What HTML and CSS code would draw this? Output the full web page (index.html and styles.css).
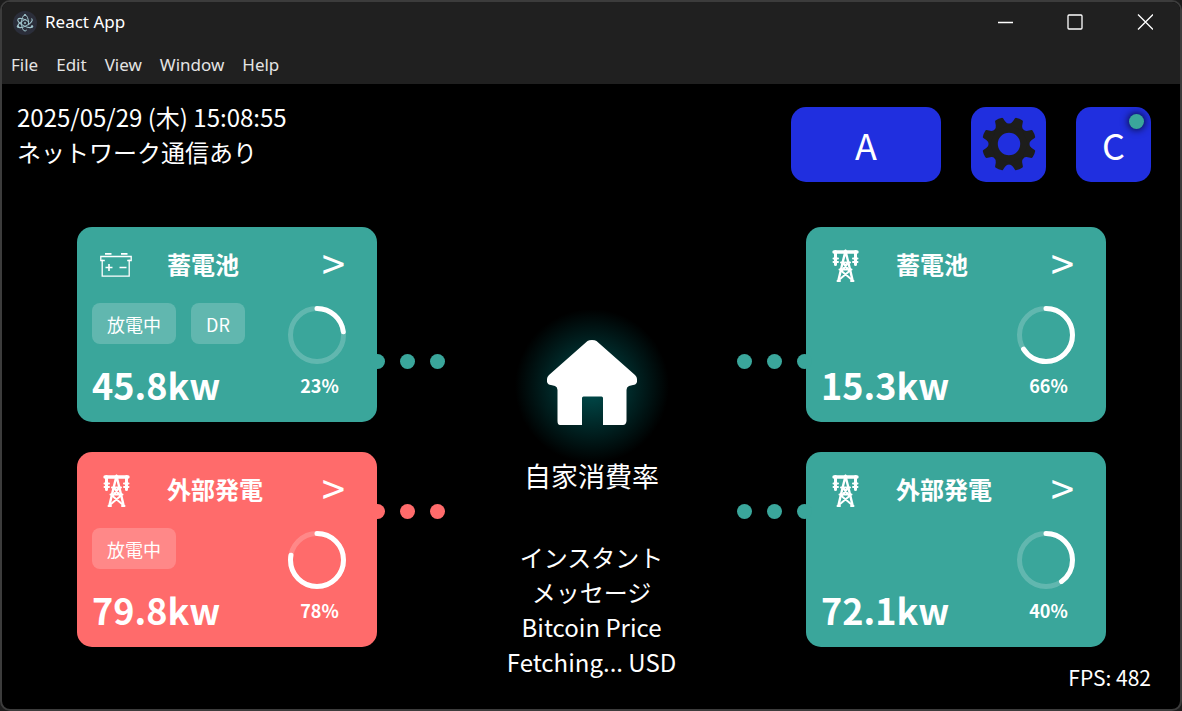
FILE: index.html
```html
<!DOCTYPE html>
<html lang="ja">
<head>
<meta charset="utf-8">
<title>React App</title>
<link rel="stylesheet" href="styles.css">
</head>
<body>
<svg class="symbols" aria-hidden="true">
  <symbol id="tower" viewBox="0 0 32 36">
    <g fill="none" stroke="#fff" stroke-linecap="round" stroke-linejoin="round">
      <path d="M5 5h23" stroke-width="3.4"/>
      <path d="M16.500 3.500v2" stroke-width="2"/>
      <path d="M6.500 4.500v13M26.500 4.500v13" stroke-width="3"/>
      <path d="M4.500 11.500h4.500M4.500 15h4.500M24 11.500h4.500M24 15h4.500" stroke-width="2"/>
      <path d="M16.500 4L14 14l-4.500 19M16.500 4L19 14l4.500 19" stroke-width="2.400"/>
      <path d="M12 15.500h9M10.500 22.500h12M14 16l6.500 8M19 16l-6.500 8M12.500 24l9.500 8M20.500 24L11 32" stroke-width="2"/>
      <path d="M8.500 34h2.500M22 34h2.500" stroke-width="2"/>
    </g>
  </symbol>
</svg>
<div class="window">
  <header class="titlebar">
    <svg class="app-icon" viewBox="0 0 24 24" aria-hidden="true">
      <circle cx="12" cy="12" r="12" fill="#2b2e3a"/>
      <g fill="none" stroke="#9fc4cb" stroke-width="1">
        <ellipse cx="12" cy="12" rx="8" ry="3" transform="rotate(28 12 12)" stroke-dasharray="30 5"/>
        <ellipse cx="12" cy="12" rx="8" ry="3" transform="rotate(-28 12 12)" stroke-dasharray="30 5"/>
        <ellipse cx="12" cy="12" rx="8" ry="3.500" transform="rotate(90 12 12)" stroke-dasharray="30 5"/>
      </g>
      <g fill="#9fc4cb"><circle cx="12" cy="12" r="1"/><circle cx="5" cy="15.500" r="1.200"/><circle cx="19" cy="15.500" r="1.200"/><circle cx="12" cy="4" r="1.100"/></g>
    </svg>
    <span class="app-title">React App</span>
    <div class="window-controls">
      <button class="window-button" aria-label="Minimize"><svg viewBox="0 0 16 16"><path d="M1 8.500h15"/></svg></button>
      <button class="window-button" aria-label="Maximize"><svg viewBox="0 0 16 16"><rect x="1" y="1" width="14" height="14" rx="1"/></svg></button>
      <button class="window-button" aria-label="Close"><svg viewBox="0 0 16 16"><path d="M1 .5l15 15M16 .5l-15 15"/></svg></button>
    </div>
  </header>
  <nav class="menubar">
    <button class="menu-item">File</button>
    <button class="menu-item">Edit</button>
    <button class="menu-item">View</button>
    <button class="menu-item">Window</button>
    <button class="menu-item">Help</button>
  </nav>
  <div class="app">
    <div class="topbar">
      <div class="status">
        <div>2025/05/29 (木) 15:08:55</div>
        <div>ネットワーク通信あり</div>
      </div>
      <div class="actions">
        <button class="action action-wide">A</button>
        <button class="action" aria-label="設定">
          <svg class="gear" viewBox="-27 -27 54 54" aria-hidden="true">
            <defs><path id="tooth" d="M-8.500-17.500Q-5.500-20-5-22.500L-4.300-26Q-4-27-3-27Q0-27.600 3-27Q4-27 4.300-26L5-22.500Q5.500-20 8.500-17.500Z"/></defs>
            <g fill="#1d1d1b">
              <path fill-rule="evenodd" d="M0-20.500A20.500 20.500 0 1 1 0 20.500 20.500 20.500 0 1 1 0-20.500ZM0-11.200A11.200 11.200 0 1 0 0 11.200 11.200 11.200 0 1 0 0-11.200Z"/>
              <use href="#tooth" transform="rotate(22.500)"/><use href="#tooth" transform="rotate(67.500)"/>
              <use href="#tooth" transform="rotate(112.500)"/><use href="#tooth" transform="rotate(157.500)"/>
              <use href="#tooth" transform="rotate(202.500)"/><use href="#tooth" transform="rotate(247.500)"/>
              <use href="#tooth" transform="rotate(292.500)"/><use href="#tooth" transform="rotate(337.500)"/>
            </g>
          </svg>
        </button>
        <button class="action">C<span class="badge"></span></button>
      </div>
    </div>
    <main class="dashboard">
      <section class="column">
        <article class="card">
          <div class="card-head">
            <svg class="card-icon" viewBox="0 0 32 36" aria-hidden="true">
              <g fill="none" stroke="#fff" stroke-width="1.300">
                <path d="M5 6.800h6.500M21 6.800h6.500" stroke-width="1.800"/>
                <path d="M.8 9.500h30.400v4h-2v15.700H2.200V13.500H.8z"/>
                <path d="M2 13.500h2.800M27.200 13.500H30"/>
                <path d="M5.500 20.500h7M9 17v7M19.500 20.500h7" stroke-width="1.600"/>
              </g>
            </svg>
            <h2 class="card-title">蓄電池</h2>
            <button class="chevron" aria-label="蓄電池の詳細">&gt;</button>
          </div>
          <div class="card-body">
            <div class="reading">
              <div class="tags"><span class="tag">放電中</span><span class="tag">DR</span></div>
              <div class="value">45.8kw</div>
            </div>
            <div class="gauge">
              <svg class="ring" viewBox="0 0 60 60"><circle class="ring-track" cx="30" cy="30" r="26.500"/><circle class="ring-fill" cx="30" cy="30" r="26.500" pathLength="100" stroke-dasharray="23 100"/></svg>
              <span class="percent">23%</span>
            </div>
          </div>
          <div class="flow flow-right flow-low"><i></i><i></i><i></i></div>
        </article>
        <article class="card card-alert">
          <div class="card-head">
            <svg class="card-icon" aria-hidden="true"><use href="#tower"/></svg>
            <h2 class="card-title">外部発電</h2>
            <button class="chevron" aria-label="外部発電の詳細">&gt;</button>
          </div>
          <div class="card-body">
            <div class="reading">
              <div class="tags"><span class="tag">放電中</span></div>
              <div class="value">79.8kw</div>
            </div>
            <div class="gauge">
              <svg class="ring" viewBox="0 0 60 60"><circle class="ring-track" cx="30" cy="30" r="26.500"/><circle class="ring-fill" cx="30" cy="30" r="26.500" pathLength="100" stroke-dasharray="78 100"/></svg>
              <span class="percent">78%</span>
            </div>
          </div>
          <div class="flow flow-right flow-high"><i></i><i></i><i></i></div>
        </article>
      </section>
      <section class="center">
        <div class="home">
          <svg class="house" viewBox="0 0 90 85" aria-hidden="true"><path fill="#fff" d="M40.500 1Q42 0 45 0T49.500 1L88 35Q90 37 90 39V42Q89 45 86 45L82 46Q79.500 47 79.500 50V81Q79 85 76 85H56V58Q56 56.500 54.500 56.500H36.500Q35 56.500 35 58V85H13Q10.500 85 10.500 81V50Q10.500 47 8 46L4 45Q1 45 0 42V39Q0 37 2 35Z"/></svg>
        </div>
        <div class="home-label">自家消費率</div>
        <div class="messages">
          <div>インスタント</div>
          <div>メッセージ</div>
          <div>Bitcoin Price</div>
          <div>Fetching... USD</div>
        </div>
      </section>
      <section class="column">
        <article class="card">
          <div class="card-head">
            <svg class="card-icon" aria-hidden="true"><use href="#tower"/></svg>
            <h2 class="card-title">蓄電池</h2>
            <button class="chevron" aria-label="蓄電池の詳細">&gt;</button>
          </div>
          <div class="card-body">
            <div class="reading">
              <div class="tags"></div>
              <div class="value">15.3kw</div>
            </div>
            <div class="gauge">
              <svg class="ring" viewBox="0 0 60 60"><circle class="ring-track" cx="30" cy="30" r="26.500"/><circle class="ring-fill" cx="30" cy="30" r="26.500" pathLength="100" stroke-dasharray="66 100"/></svg>
              <span class="percent">66%</span>
            </div>
          </div>
          <div class="flow flow-left flow-low"><i></i><i></i><i></i></div>
        </article>
        <article class="card">
          <div class="card-head">
            <svg class="card-icon" aria-hidden="true"><use href="#tower"/></svg>
            <h2 class="card-title">外部発電</h2>
            <button class="chevron" aria-label="外部発電の詳細">&gt;</button>
          </div>
          <div class="card-body">
            <div class="reading">
              <div class="tags"></div>
              <div class="value">72.1kw</div>
            </div>
            <div class="gauge">
              <svg class="ring" viewBox="0 0 60 60"><circle class="ring-track" cx="30" cy="30" r="26.500"/><circle class="ring-fill" cx="30" cy="30" r="26.500" pathLength="100" stroke-dasharray="40 100"/></svg>
              <span class="percent">40%</span>
            </div>
          </div>
          <div class="flow flow-left flow-high"><i></i><i></i><i></i></div>
        </article>
      </section>
    </main>
    <div class="fps">FPS: 482</div>
  </div>
</div>
</body>
</html>
```
FILE: styles.css
```css
* { box-sizing: border-box; }

body {
  margin: 0;
  background: #1c1c1c;
  color: #fff;
  font-family: "Noto Sans CJK JP", "Noto Sans", sans-serif;
}

button {
  margin: 0;
  padding: 0;
  border: 0;
  background: none;
  color: inherit;
  font: inherit;
}

.symbols { display: none; }

.window {
  display: flex;
  flex-direction: column;
  min-height: 100vh;
  border: 2px solid #3c3c3c;
  border-radius: 10px;
  background: #000;
  overflow: hidden;
}

.titlebar {
  display: flex;
  align-items: center;
  height: 42px;
  padding-left: 11px;
  background: #202020;
  font-family: "Noto Sans", sans-serif;
  font-size: 17px;
  line-height: 22px;
}

.app-icon { width: 24px; height: 24px; }
.app-title { margin-left: 8px; padding-bottom: 2px; }

.window-controls { display: flex; margin-left: auto; }

.window-button {
  display: flex;
  align-items: center;
  justify-content: center;
  width: 70px;
  height: 42px;
  padding-bottom: 2px;
}

.window-button svg {
  width: 16px;
  height: 16px;
  fill: none;
  stroke: #fff;
  stroke-width: 1.3;
}

.menubar {
  display: flex;
  gap: 18px;
  height: 40px;
  padding-left: 9px;
  background: #202020;
  color: #e4e4e4;
  font-family: "Noto Sans", sans-serif;
  font-size: 17px;
}

.app {
  position: relative;
  flex: 1;
  padding-bottom: 29px;
}

.topbar {
  display: flex;
  justify-content: space-between;
  padding: 15px 29px 0 15px;
}

.status { font-size: 24px; line-height: 35px; }

.actions { display: flex; gap: 30px; padding-top: 8px; }

.action {
  position: relative;
  display: flex;
  align-items: center;
  justify-content: center;
  width: 75px;
  height: 75px;
  padding-bottom: 2px;
  border-radius: 15px;
  background: #202fdf;
  font-size: 36px;
}

.action-wide { width: 150px; }
.gear { width: 54px; height: 54px; }

.badge {
  position: absolute;
  top: 7px;
  right: 7px;
  width: 15px;
  height: 15px;
  border-radius: 50%;
  background: #3aa69b;
  box-shadow: 0 0 8px #000;
}

.dashboard {
  display: grid;
  grid-template-columns: 300px 1fr 300px;
  padding: 45px 74px 0 75px;
}

.column { display: flex; flex-direction: column; gap: 30px; }

.card {
  --tone: #3aa69b;
  position: relative;
  height: 195px;
  padding: 15px;
  border-radius: 15px;
  background: var(--tone);
}

.card-alert { --tone: #ff6b6b; }

.card-head { display: flex; align-items: center; height: 45px; }
.card-icon { width: 32px; height: 36px; margin: 0 35px 0 8px; }
.card-title { margin: 0; padding-bottom: 2px; font-size: 24px; font-weight: 700; line-height: 36px; }

.chevron {
  margin-left: auto;
  padding: 0 17px 6px 0;
  font-size: 42px;
  line-height: 42px;
}

.card-body { display: flex; justify-content: space-between; padding-top: 16px; }
.tags { display: flex; gap: 15px; height: 41px; }

.tag {
  padding: 8px 15px 6px;
  border-radius: 8px;
  background: rgba(255, 255, 255, 0.2);
  font-size: 18px;
  line-height: 27px;
}

.value { font-size: 36px; font-weight: 700; line-height: 80px; }

.gauge {
  display: flex;
  flex-direction: column;
  width: 65px;
  margin-right: 10px;
  padding-top: 2px;
}

.ring { width: 60px; height: 60px; transform: rotate(-90deg); }
.ring circle { fill: none; stroke-width: 5; }
.ring-track { stroke: rgba(255, 255, 255, 0.2); }
.ring-fill { stroke: #fff; stroke-linecap: round; }

.percent {
  margin-top: 7px;
  font-size: 18px;
  font-weight: 700;
  line-height: 26px;
  text-align: center;
}

.flow { position: absolute; display: flex; gap: 15px; }
.flow i { width: 15px; height: 15px; border-radius: 50%; background: var(--tone); }
.flow-right { left: 293px; }
.flow-left { right: 294px; }
.flow-low { top: 127px; }
.flow-high { top: 52px; }

.center {
  display: flex;
  flex-direction: column;
  align-items: center;
  padding-top: 83px;
  text-align: center;
}

.home {
  display: flex;
  align-items: center;
  justify-content: center;
  width: 160px;
  height: 152px;
  background: radial-gradient(circle 77px, #005050, #000);
}

.house { width: 90px; height: 85px; margin-bottom: 7px; }
.home-label { font-size: 27px; line-height: 28px; }
.messages { margin-top: 49px; font-size: 24px; line-height: 35px; }

.fps {
  position: absolute;
  right: 29px;
  bottom: 16px;
  font-size: 21px;
  line-height: 32px;
}
```
